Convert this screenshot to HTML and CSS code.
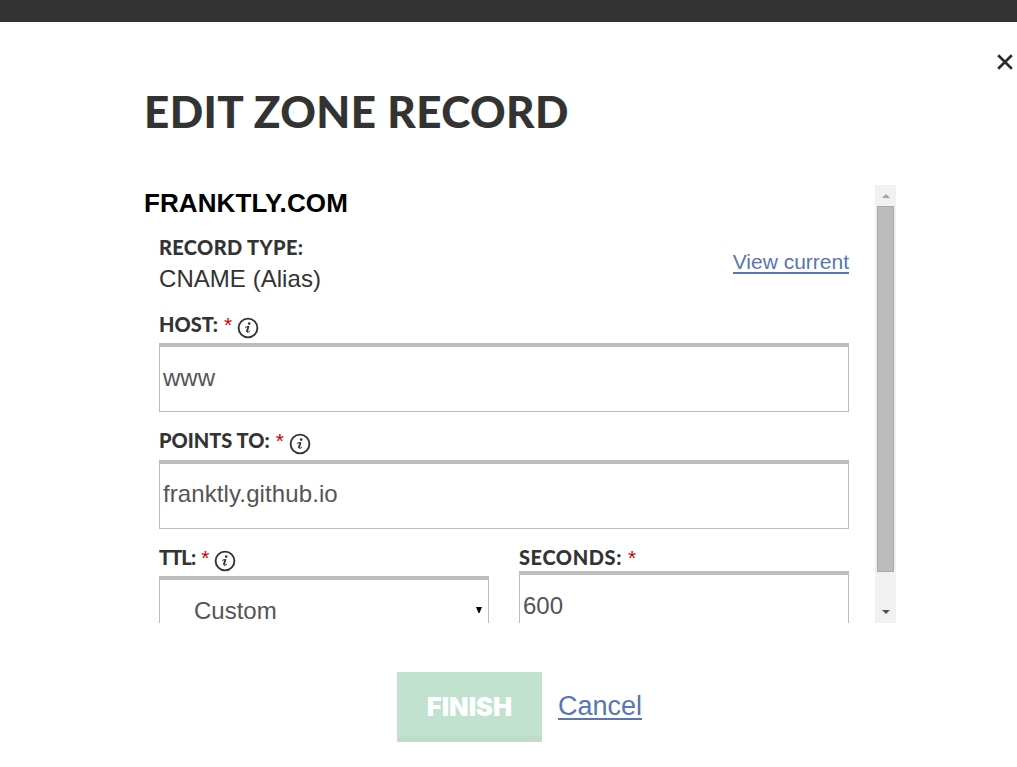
FILE: index.html
```html
<!DOCTYPE html>
<html lang="en">
<head>
<meta charset="utf-8">
<title>Edit Zone Record</title>
<link rel="stylesheet" href="styles.css">
</head>
<body>
<svg class="sprite" aria-hidden="true">
  <symbol id="info" viewBox="0 0 22 22">
    <circle cx="11" cy="11" r="9.4" fill="none" stroke="#333" stroke-width="1.9"/>
    <circle cx="12.2" cy="6.6" r="1.3" fill="#333"/>
    <path d="M8 10.3c1.4-.2 2.4-.7 4-.9M9.9 14.9c.5 1 1.800.3 3.200-1" fill="none" stroke="#333" stroke-width="1"/>
    <path d="M11.500 9.300l-1.700 5.800" fill="none" stroke="#333" stroke-width="1.900"/>
  </symbol>
</svg>
<div class="topbar"></div>
<main class="dialog">
  <button class="close" aria-label="Close"><svg width="18" height="18" viewBox="0 0 18 18"><path d="M2.200 2.200l13.600 13.600M15.800 2.200L2.200 15.800" stroke="#2b2b2f" stroke-width="2.700"/></svg></button>
  <h1 class="title">EDIT ZONE RECORD</h1>
  <section class="panel">
    <div class="content">
      <h2 class="domain">FRANKTLY.COM</h2>
      <div class="form">
        <div class="record">
          <div>
            <div class="label"><span class="name type-name">RECORD TYPE:</span></div>
            <div class="record-value">CNAME (Alias)</div>
          </div>
          <a class="view">View current</a>
        </div>
        <div class="field host">
          <div class="label"><span class="name">HOST:</span><span class="star">*</span><svg class="info"><use href="#info"/></svg></div>
          <div class="input">www</div>
        </div>
        <div class="field points">
          <div class="label"><span class="name">POINTS TO:</span><span class="star">*</span><svg class="info"><use href="#info"/></svg></div>
          <div class="input">franktly.github.io</div>
        </div>
        <div class="row">
          <div class="field">
            <div class="label"><span class="name ttl-name">TTL:</span><span class="star">*</span><svg class="info"><use href="#info"/></svg></div>
            <div class="input select"><span class="choice">Custom</span><svg class="caret" width="6" height="7" viewBox="0 0 6 7"><path d="M0 0h6L3.500 6h-1z"/></svg></div>
          </div>
          <div class="field">
            <div class="label"><span class="name seconds-name">SECONDS:</span><span class="star">*</span></div>
            <div class="input seconds">600</div>
          </div>
        </div>
      </div>
    </div>
    <div class="scrollbar">
      <svg width="8" height="4" viewBox="0 0 8 4"><path d="M0 4L4 0l4 4z" fill="#a3a3a3"/></svg>
      <div class="thumb"></div>
      <svg width="8" height="4" viewBox="0 0 8 4" class="down"><path d="M0 0h8L4 4z" fill="#505050"/></svg>
    </div>
  </section>
  <footer class="actions">
    <button class="finish">FINISH</button>
    <a class="cancel">Cancel</a>
  </footer>
</main>
</body>
</html>
```
FILE: styles.css
```css
* { box-sizing: border-box; }
body {
  margin: 0;
  height: 767px;
  overflow: hidden;
  background: #fff;
  color: #333;
  font-family: "Liberation Sans", Arial, sans-serif;
  white-space: nowrap;
}
.sprite { display: block; width: 0; height: 0; }
.topbar { height: 22px; background: #333; }
.dialog { display: flex; flex-direction: column; padding: 31px 0 0 144px; }
.close {
  display: block;
  width: 18px;
  height: 18px;
  margin: 0 3px 0 auto;
  padding: 0;
  border: 0;
  background: none;
}
.close svg { display: block; }
.title {
  margin: 15px 0 0;
  font: 900 44px/50px Lato, sans-serif;
  letter-spacing: 0.4px;
}
.panel {
  display: flex;
  justify-content: space-between;
  width: 752px;
  height: 438px;
  margin-top: 49px;
  overflow: hidden;
}
.domain {
  margin: 3px 0 0;
  color: #000;
  font-size: 26px;
  line-height: 30px;
  letter-spacing: 0.1px;
}
.form { width: 690px; margin: 16px 0 0 15px; }
.record { display: flex; justify-content: space-between; height: 77px; }
.label { display: flex; height: 32px; line-height: 26px; }
.name { font: 900 20px/26px Lato, sans-serif; }
.type-name { letter-spacing: 0.35px; }
.ttl-name { letter-spacing: -0.9px; }
.seconds-name { letter-spacing: 0.6px; }
.star { margin-left: 6px; color: #d00000; font-size: 21px; line-height: 28px; }
.info { width: 22px; height: 22px; margin: 6px 0 0 5px; }
.record-value { margin-top: -2px; font-size: 24px; line-height: 30px; letter-spacing: 0.05px; }
.view {
  align-self: flex-start;
  margin-top: 17px;
  border-bottom: 2px solid #5876b3;
  color: #5876b3;
  font-size: 21px;
  line-height: 21px;
}
.field { height: 117px; }
.host { height: 116px; }
.input {
  height: 69px;
  padding-left: 3px;
  border: 1px solid #bdbdbd;
  border-top-width: 4px;
  color: #555;
  font-size: 24px;
  line-height: 62px;
}
.points .label { height: 33px; }
.points .input { line-height: 60px; letter-spacing: 0.1px; }
.row { display: grid; grid-template-columns: 330px 330px; gap: 30px; }
.select { display: flex; justify-content: space-between; padding: 0 6px 0 34px; }
.choice { height: 24px; margin-top: 18px; line-height: 26px; }
.caret { margin-top: 27px; }
.row .seconds { margin-top: -5px; }
.scrollbar {
  display: flex;
  flex-direction: column;
  align-items: center;
  width: 21px;
  padding-top: 9px;
  background: #f1f1f1;
}
.thumb {
  width: 17px;
  height: 366px;
  margin-top: 8px;
  border: 1px solid #a8a8a8;
  background: #bcbcbc;
}
.down { margin-top: 38px; }
.actions { display: flex; margin: 49px 0 0 253px; }
.finish {
  width: 145px;
  height: 70px;
  padding: 6px 0 0;
  border: 0;
  border-bottom: 6px solid #bfdcca;
  background: #c0e2ce;
  color: #fff;
  font: 900 25.5px/58px Inter, sans-serif;
}
.cancel {
  height: 28px;
  margin: 20px 0 0 16px;
  border-bottom: 2px solid #5876b3;
  color: #5876b3;
  font-size: 27px;
  line-height: 28px;
}
```
